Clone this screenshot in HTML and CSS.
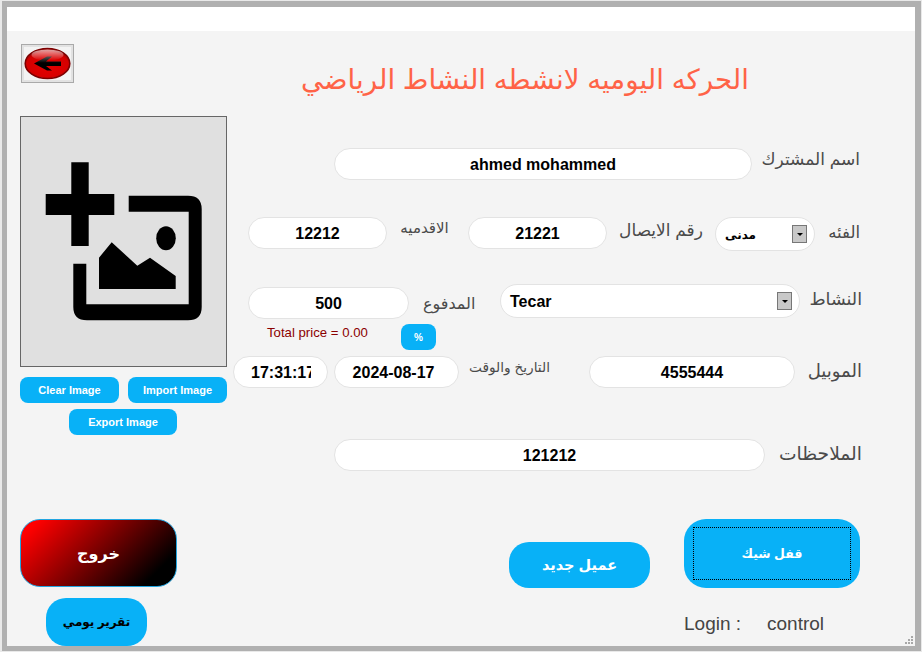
FILE: index.html
```html
<!DOCTYPE html>
<html lang="ar">
<head>
    <meta charset="utf-8">
    <title>الحركه اليوميه</title>
    <link rel="stylesheet" href="styles.css">
</head>
<body>
    <div class="window">
        <div class="title-strip"></div>
        <div class="content">
            <!-- left column: back button, photo, exit -->
            <div class="side">
                <button type="button" class="back-btn">
                    <svg width="47" height="33" viewBox="3 3 47 33">
                        <defs>
                            <radialGradient id="redBall" cx="50%" cy="60%" r="60%">
                                <stop offset="0" stop-color="#e60000"/>
                                <stop offset="0.8" stop-color="#d40000"/>
                                <stop offset="1" stop-color="#8a0000"/>
                            </radialGradient>
                            <linearGradient id="shine" x1="0" y1="0" x2="0" y2="1">
                                <stop offset="0" stop-color="#ffffff" stop-opacity="0.65"/>
                                <stop offset="1" stop-color="#ffffff" stop-opacity="0"/>
                            </linearGradient>
                            <linearGradient id="arrowFill" x1="0" y1="0" x2="0" y2="1">
                                <stop offset="0" stop-color="#555"/>
                                <stop offset="0.45" stop-color="#000"/>
                            </linearGradient>
                        </defs>
                        <ellipse cx="26.5" cy="19.5" rx="22.3" ry="15" fill="url(#redBall)" stroke="#7c0000" stroke-width="1.6"/>
                        <ellipse cx="26.5" cy="11" rx="16" ry="5.5" fill="url(#shine)"/>
                        <path d="M13 19.5 L26 12.5 L31 12.5 L25 17.5 L40 17.5 L40 22 L25 22 L31 26.5 L26 26.5 Z" fill="url(#arrowFill)"/>
                    </svg>
                </button>
                <div class="photo">
                    <svg width="205" height="249" viewBox="1 1 205 249">
                        <path d="M51.3 46.3 H68.7 V78 H94.3 V99 H68.7 V130 H51.3 V99 H25.7 V78 H51.3 Z"/>
                        <path d="M108.7 79.7 H168 Q181.7 79.7 181.7 93 V191 Q181.7 204.3 168 204.3 H67 Q53.3 204.3 53.3 191 V147.7 H66.3 V188.3 H168.7 V95.7 H108.7 Z"/>
                        <ellipse cx="146" cy="122.3" rx="9.8" ry="12"/>
                        <path d="M79 173 V141.7 L91.7 126.3 L117.3 149.7 L130 141.7 L155.7 160 V173 Z"/>
                    </svg>
                </div>
                <div class="image-btns">
                    <button type="button" class="small-btn clear-btn">Clear Image</button>
                    <button type="button" class="small-btn import-btn">Import Image</button>
                    <button type="button" class="small-btn export-btn">Export Image</button>
                </div>
                <button type="button" class="exit-btn">خروج</button>
                <button type="button" class="report-btn">تقرير يومي</button>
            </div>

            <!-- form column -->
            <div class="main">
                <h1 class="page-title">الحركه اليوميه لانشطه النشاط الرياضي</h1>

                <div class="row row-name">
                    <input class="field w-name" type="text" value="ahmed mohammed">
                    <label class="lbl lbl-name">اسم المشترك</label>
                </div>

                <div class="row row-second">
                    <input class="field w-139" type="text" value="12212">
                    <label class="lbl lbl-seniority">الاقدميه</label>
                    <input class="field w-139" type="text" value="21221">
                    <label class="lbl lbl-receipt">رقم الايصال</label>
                    <div class="combo w-100"><span class="combo-text combo-ar">مدنى</span><span class="combo-arrow"></span></div>
                    <label class="lbl lbl-category">الفئه</label>
                </div>

                <div class="row row-third">
                    <input class="field w-161" type="text" value="500">
                    <label class="lbl lbl-paid">المدفوع</label>
                    <div class="combo w-300"><span class="combo-text">Tecar</span><span class="combo-arrow"></span></div>
                    <label class="lbl lbl-activity">النشاط</label>
                </div>

                <div class="price-row">
                    <span class="total-price">Total price = 0.00</span>
                    <button type="button" class="percent-btn">%</button>
                </div>

                <div class="row row-fourth">
                    <input class="field time-field" type="text" value="17:31:17">
                    <input class="field date-field" type="text" value="2024-08-17">
                    <label class="lbl lbl-date">التاريخ والوقت</label>
                    <input class="field w-206" type="text" value="4555444">
                    <label class="lbl lbl-mobile">الموبيل</label>
                </div>

                <div class="row row-notes">
                    <input class="field w-431" type="text" value="121212">
                    <label class="lbl lbl-notes">الملاحظات</label>
                </div>

                <div class="row row-actions">
                    <button type="button" class="new-btn">عميل جديد</button>
                    <button type="button" class="lock-btn"><span class="focus-box">قفل شيك</span></button>
                </div>

                <div class="login-row">
                    <span>Login :</span>
                    <span>control</span>
                </div>
            </div>
        </div>

        <svg class="grip" width="8" height="8" viewBox="0 0 8 8">
            <rect x="6" y="0" width="2" height="2"/>
            <rect x="3" y="3" width="2" height="2"/>
            <rect x="6" y="3" width="2" height="2"/>
            <rect x="0" y="6" width="2" height="2"/>
            <rect x="3" y="6" width="2" height="2"/>
            <rect x="6" y="6" width="2" height="2"/>
        </svg>
    </div>
</body>
</html>
```

FILE: styles.css
```css
* {
    box-sizing: border-box;
}

body {
    margin: 0;
    background-color: #e9e9e9;
    font-family: "Liberation Sans", "DejaVu Sans", sans-serif;
}

.window {
    position: relative;
    width: 919px;
    height: 650px;
    margin: 1px 1px 0 2px;
    border-style: solid;
    border-color: #b0b0b0;
    border-width: 6px 6px 5px 5px;
    box-shadow: 0 1px 0 #777;
    background-color: #f4f4f4;
}

.title-strip {
    height: 24px;
    background-color: #ffffff;
}

.content {
    display: flex;
    height: 614px;
}

/* left column */
.side {
    width: 220px;
    padding: 13px 0 0 13px;
    flex-shrink: 0;
}

button {
    border: none;
    padding: 0;
    font-family: inherit;
}

.back-btn {
    display: flex;
    align-items: center;
    justify-content: center;
    width: 53px;
    height: 39px;
    margin-left: 1px;
    border: 1px solid #a9a9a9;
    outline: 2px solid #e2e2e2;
    outline-offset: -3px;
    background-color: #f3f3f3;
}

.photo {
    width: 207px;
    height: 251px;
    margin-top: 33px;
    border: 1px solid #666;
    background-color: #e0e0e0;
}

.photo svg {
    display: block;
}

.image-btns {
    display: flex;
    flex-wrap: wrap;
    justify-content: space-between;
    width: 207px;
    margin-top: 10px;
    row-gap: 6px;
}

.small-btn {
    height: 26px;
    border-radius: 8px;
    background-color: #08b1f7;
    color: #fff;
    font-size: 11px;
    font-weight: bold;
}

.clear-btn {
    width: 99px;
}

.import-btn {
    width: 99px;
}

.export-btn {
    width: 108px;
    margin-left: 49px;
    margin-right: 50px;
}

.exit-btn {
    display: block;
    width: 157px;
    height: 68px;
    margin-top: 84px;
    border: 1px solid #22a5e0;
    border-radius: 20px;
    background: linear-gradient(135deg, #ff0000 8%, #000000 85%);
    color: #fff;
    font-size: 16px;
    font-weight: bold;
}

.report-btn {
    display: block;
    width: 101px;
    height: 48px;
    margin: 11px 0 0 26px;
    border-radius: 20px;
    background-color: #08b1f7;
    color: #000;
    font-size: 12px;
    font-weight: bold;
}

/* form column */
.main {
    flex: 1;
    min-width: 0;
}

.page-title {
    height: 40px;
    margin: 29px 92px 0 0;
    color: #ff6347;
    font-size: 27.7px;
    font-weight: normal;
    line-height: 40px;
    text-align: center;
    white-space: nowrap;
}

.row {
    display: flex;
    align-items: flex-start;
    justify-content: flex-end;
    padding-right: 53px;
}

.row-name {
    height: 32px;
    margin-top: 48px;
    padding-right: 55px;
}

.row-second {
    height: 34px;
    margin-top: 37px;
    padding-right: 55px;
}

.row-third {
    height: 35px;
    margin-top: 33px;
}

.row-third .field {
    margin-top: 3px;
}

.row-fourth {
    height: 32px;
    margin-top: 6px;
}

.row-notes {
    height: 32px;
    margin-top: 51px;
}

.field {
    height: 32px;
    padding: 2px 10px 0;
    border: 1px solid #e3e3e3;
    border-radius: 16px;
    background-color: #fff;
    color: #000;
    font-family: inherit;
    font-size: 16px;
    font-weight: bold;
    text-align: center;
}

.w-name { width: 418px; }
.w-139 { width: 139px; }
.w-161 { width: 161px; }
.w-206 { width: 206px; }
.w-431 { width: 431px; }

.time-field {
    width: 95px;
    padding: 2px 16px 0 17px;
    text-align: left;
}

.date-field {
    width: 125px;
    margin-left: 6px;
    padding: 2px 16px 0 10px;
}

/* labels: each one fills the gap beside its field */
.lbl {
    color: #4a4a4a;
    white-space: nowrap;
    text-align: right;
}

.lbl-name {
    width: 108px;
    font-size: 17px;
    line-height: 24px;
}

.lbl-seniority {
    width: 81px;
    padding-right: 6px;
    font-size: 15px;
    line-height: 22px;
    text-align: center;
}

.lbl-receipt {
    width: 108px;
    font-size: 17px;
    line-height: 28px;
    text-align: center;
}

.lbl-category {
    width: 45px;
    font-size: 16.5px;
    line-height: 30px;
}

.lbl-paid {
    width: 91px;
    padding: 0 26px 0 14px;
    font-size: 16px;
    line-height: 40px;
    text-align: left;
}

.lbl-activity {
    width: 62px;
    font-size: 17.5px;
    line-height: 30px;
}

.lbl-date {
    width: 130px;
    padding-left: 10px;
    font-size: 13.7px;
    line-height: 24px;
    text-align: left;
}

.lbl-mobile {
    width: 67px;
    font-size: 18px;
    line-height: 30px;
}

.lbl-notes {
    width: 97px;
    font-size: 18.7px;
    line-height: 30px;
}

.combo {
    display: flex;
    align-items: center;
    justify-content: space-between;
    height: 34px;
    padding: 0 7px 0 9px;
    border: 1px solid #e3e3e3;
    border-radius: 17px;
    background-color: #fff;
}

.w-100 { width: 100px; }
.w-300 { width: 300px; }

.combo-text {
    margin-top: 2px;
    font-size: 16px;
    font-weight: bold;
}

.combo-ar {
    font-size: 12px;
}

.combo-arrow {
    display: flex;
    align-items: center;
    justify-content: center;
    width: 15px;
    height: 18px;
    border: 1px solid #777;
    background-color: #c8c8c8;
}

.combo-arrow::after {
    content: "";
    border-top: 3px solid #000;
    border-left: 3px solid transparent;
    border-right: 3px solid transparent;
}

.price-row {
    display: flex;
    align-items: flex-start;
    height: 26px;
    margin-top: 5px;
    padding-left: 40px;
}

.total-price {
    width: 134px;
    margin-top: 1px;
    color: #8b0000;
    font-size: 13.2px;
    line-height: 15px;
}

.percent-btn {
    width: 35px;
    height: 26px;
    border-radius: 8px;
    background-color: #08b1f7;
    color: #fff;
    font-size: 10px;
    font-weight: bold;
}

.row-actions {
    height: 69px;
    margin-top: 48px;
    padding-right: 55px;
    align-items: flex-end;
    column-gap: 34px;
}

.new-btn {
    width: 141px;
    height: 46px;
    border-radius: 20px;
    background-color: #08b1f7;
    color: #fff;
    font-size: 14.5px;
    font-weight: bold;
}

.lock-btn {
    display: flex;
    width: 176px;
    height: 69px;
    padding: 8px 9px;
    border-radius: 22px;
    background-color: #08b1f7;
    color: #fff;
    font-size: 12.5px;
    font-weight: bold;
}

.focus-box {
    display: flex;
    flex: 1;
    align-items: center;
    justify-content: center;
    border: 1px dotted #000;
}

.login-row {
    display: flex;
    column-gap: 26px;
    margin: 25px 0 0 457px;
    color: #444;
    font-size: 19px;
    line-height: 22px;
}

/* resize grip, sits on the window corner */
.grip {
    position: absolute;
    right: 2px;
    bottom: 2px;
    fill: #a8a8a8;
}
```
